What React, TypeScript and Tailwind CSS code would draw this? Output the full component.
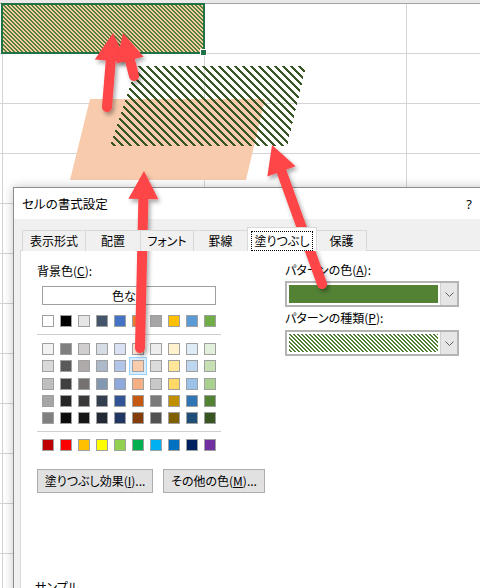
import React from "react";

const topRow = ["bg-[#ffffff]", "bg-[#000000]", "bg-[#e7e6e6]", "bg-[#44546a]", "bg-[#4472c4]", "bg-[#ed7d31]", "bg-[#a5a5a5]", "bg-[#ffc000]", "bg-[#5b9bd5]", "bg-[#70ad47]"];
const tintRows = [
    ["bg-[#f2f2f2]", "bg-[#7f7f7f]", "bg-[#d0cece]", "bg-[#d6dce4]", "bg-[#d9e1f2]", "bg-[#fce4d6]", "bg-[#ededed]", "bg-[#fff2cc]", "bg-[#ddebf7]", "bg-[#e2efda]"],
    ["bg-[#d9d9d9]", "bg-[#595959]", "bg-[#aeaaaa]", "bg-[#acb9ca]", "bg-[#b4c6e7]", "bg-[#f8cbad]", "bg-[#dbdbdb]", "bg-[#ffe699]", "bg-[#bdd7ee]", "bg-[#c6e0b4]"],
    ["bg-[#bfbfbf]", "bg-[#404040]", "bg-[#757171]", "bg-[#8497b0]", "bg-[#8ea9db]", "bg-[#f4b084]", "bg-[#c9c9c9]", "bg-[#ffd966]", "bg-[#9bc2e6]", "bg-[#a9d08e]"],
    ["bg-[#a6a6a6]", "bg-[#262626]", "bg-[#3a3838]", "bg-[#333f4f]", "bg-[#305496]", "bg-[#c65911]", "bg-[#7b7b7b]", "bg-[#bf8f00]", "bg-[#2f75b5]", "bg-[#548235]"],
    ["bg-[#808080]", "bg-[#0d0d0d]", "bg-[#161616]", "bg-[#222b35]", "bg-[#203764]", "bg-[#833c0c]", "bg-[#525252]", "bg-[#806000]", "bg-[#1f4e78]", "bg-[#375623]"],
];
const standardRow = ["bg-[#c00000]", "bg-[#ff0000]", "bg-[#ffc000]", "bg-[#ffff00]", "bg-[#92d050]", "bg-[#00b050]", "bg-[#00b0f0]", "bg-[#0070c0]", "bg-[#002060]", "bg-[#7030a0]"];

const tabs = [
    { label: "表示形式", w: "w-[64px]" },
    { label: "配置", w: "w-[56px]" },
    { label: "フォント", w: "w-[54px]" },
    { label: "罫線", w: "w-[55px]" },
    { label: "塗りつぶし", w: "w-[70px]", active: true },
    { label: "保護", w: "w-[51px]" },
];

const RED = "#fe4447";

// pixel stripes going down-right, (x - y) mod period < thick
function hatchRects(period: number, thick: number, fg: string) {
    const rects: React.ReactNode[] = [];
    for (let y = 0; y < period; y++) {
        for (let k = 0; k < thick; k++) {
            rects.push(<rect key={`${y}-${k}`} x={(y + k) % period} y={y} width={1} height={1} fill={fg} />);
        }
    }
    return rects;
}

function Hatch({ id, period, thick, fg, bg }: { id: string; period: number; thick: number; fg: string; bg: string }) {
    return (
        <svg className="block w-full h-full" shapeRendering="crispEdges">
            <defs>
                <pattern id={id} width={period} height={period} patternUnits="userSpaceOnUse">
                    <rect width={period} height={period} fill={bg} />
                    {hatchRects(period, thick, fg)}
                </pattern>
            </defs>
            <rect width="100%" height="100%" fill={`url(#${id})`} />
        </svg>
    );
}

function Arrow({ x1, y1, x2, y2, head = 28, half = 15 }: { x1: number; y1: number; x2: number; y2: number; head?: number; half?: number }) {
    const dx = x2 - x1;
    const dy = y2 - y1;
    const len = Math.hypot(dx, dy);
    const ux = dx / len;
    const uy = dy / len;
    const bx = x2 - ux * head;
    const by = y2 - uy * head;
    const px = -uy * half;
    const py = ux * half;
    return (
        <g filter="url(#arrowShadow)">
            <line x1={x1} y1={y1} x2={bx + ux * 3} y2={by + uy * 3} stroke={RED} strokeWidth={10} strokeLinecap="round" />
            <polygon points={`${x2},${y2} ${bx + px},${by + py} ${bx - px},${by - py}`} fill={RED} />
        </g>
    );
}

function Swatch({ bg, selected }: { bg: string; selected?: boolean }) {
    return (
        <div
            className={`w-[12px] h-[12px] border border-[#a0a0a0] ${bg} ${
                selected ? "shadow-[0_0_0_2px_#d8eeff,0_0_0_3px_#99d1ff]" : ""
            }`}
        />
    );
}

function SwatchRow({ colors, selectedIndex }: { colors: string[]; selectedIndex?: number }) {
    return (
        <div className="flex gap-[6px] ml-[5px]">
            {colors.map((c, i) => (
                <Swatch key={i} bg={c} selected={i === selectedIndex} />
            ))}
        </div>
    );
}

function Chevron() {
    return (
        <svg width="9" height="5" viewBox="0 0 9 5">
            <polyline points="0.5,0.5 4.5,4.5 8.5,0.5" fill="none" stroke="#606060" strokeWidth="1" />
        </svg>
    );
}

function Dropdown({ children }: { children: React.ReactNode }) {
    return (
        <div className="flex w-[174px] h-[26px] border-2 border-[#b4b4b4] bg-white">
            <div className="flex-1 p-[2px]">{children}</div>
            <div className="w-[17px] flex items-center justify-center bg-[#e6e6e6] border-l border-[#cfcfcf]">
                <Chevron />
            </div>
        </div>
    );
}

export default function App() {
    const rows = Array.from({ length: 12 });

    return (
        <div className="relative w-[480px] h-[588px] overflow-hidden bg-white">
            {/* Sheet grid */}
            <div className="h-[4px] bg-[#e9e9e9] border-b border-[#a3a3a3]" />
            {rows.map((_, r) => (
                <div key={r} className="flex h-[50px] border-b border-[#d4d4d4]">
                    <div className="w-[3px] border-r border-[#d4d4d4]" />
                    <div className="w-[202px] border-r border-[#d4d4d4]" />
                    <div className="w-[202px] border-r border-[#d4d4d4]" />
                    <div className="flex-1" />
                </div>
            ))}

            {/* Selected cell */}
            <div className="absolute left-[1px] top-[3px] w-[204px] h-[51px] border-2 border-[#217346]">
                <Hatch id="cellHatch" period={4} thick={2} fg="#548235" bg="#f8cbad" />
            </div>
            <div className="absolute left-[200px] top-[49px] w-[7px] h-[7px] bg-[#217346] border border-white" />

            {/* Shapes */}
            <svg className="absolute left-0 top-0 w-[480px] h-[588px] pointer-events-none" shapeRendering="crispEdges">
                <defs>
                    <pattern id="bigHatch" width={8} height={8} patternUnits="userSpaceOnUse">
                        {hatchRects(8, 3, "#375623")}
                    </pattern>
                </defs>
                <polygon points="90,99 265,99 246,180 70,180" fill="#f8cbad" shapeRendering="auto" />
                <polygon points="137,66 306,66 287,146 110,146" fill="url(#bigHatch)" />
            </svg>

            {/* Dialog */}
            <div className="absolute left-[13px] top-[187px] w-[480px] h-[420px] border border-[#8c8c8c] bg-[#f0f0f0] shadow-[0_0_10px_rgba(0,0,0,0.22)] font-['Noto_Sans_CJK_JP','Noto_Sans',sans-serif] text-[12px] leading-[16px] text-black [font-feature-settings:'palt']">
                <div className="h-[31px] bg-white flex items-center justify-between pl-[8px] pr-[20px]">
                    <span className="text-[12.5px]">セルの書式設定</span>
                    <span className="font-['Noto_Sans',sans-serif] text-[13px]">?</span>
                </div>

                {/* Tabs */}
                <div className="relative z-10 flex items-end h-[32px] ml-[8px] -mb-px">
                    {tabs.map((t, i) =>
                        t.active ? (
                            <div
                                key={t.label}
                                className={`${t.w} -ml-px h-[24px] bg-white border border-b-0 border-[#d9d9d9] flex justify-center`}
                            >
                                <span className="mt-[3px] h-[20px] px-[3px] border border-dotted border-black flex items-center">
                                    {t.label}
                                </span>
                            </div>
                        ) : (
                            <div
                                key={t.label}
                                className={`${t.w} ${i === 0 ? "" : "-ml-px"} h-[21px] bg-[#f0f0f0] border border-b-0 border-[#d9d9d9] flex items-center justify-center`}
                            >
                                {t.label}
                            </div>
                        )
                    )}
                </div>

                {/* Panel */}
                <div className="ml-[6px] h-[360px] bg-white border border-[#d9d9d9] flex">
                    <div className="w-[248px] pl-[16px] pt-[12px] flex flex-col">
                        <div>
                            背景色(<span className="underline">C</span>):
                        </div>
                        <div className="mt-[7px] ml-[5px] w-[174px] h-[19px] border border-[#a0a0a0] flex items-center justify-center">
                            色なし
                        </div>
                        <div className="mt-[10px]">
                            <SwatchRow colors={topRow} />
                        </div>
                        <div className="mt-[7px] w-[184px] h-px bg-[#cfcfcf]" />
                        <div className="mt-[8px] flex flex-col gap-[5.25px]">
                            {tintRows.map((row, i) => (
                                <SwatchRow key={i} colors={row} selectedIndex={i === 1 ? 5 : undefined} />
                            ))}
                        </div>
                        <div className="mt-[7px] w-[184px] h-px bg-[#cfcfcf]" />
                        <div className="mt-[7px]">
                            <SwatchRow colors={standardRow} />
                        </div>
                        <div className="mt-[18px] flex gap-[10px]">
                            <button className="w-[116px] h-[24px] bg-[#e1e1e1] border border-[#adadad] flex items-center justify-center">
                                塗りつぶし効果(<span className="underline">I</span>)...
                            </button>
                            <button className="w-[102px] h-[24px] bg-[#e1e1e1] border border-[#adadad] flex items-center justify-center">
                                その他の色(<span className="underline">M</span>)...
                            </button>
                        </div>
                        <div className="mt-[86px] -ml-[2px]">サンプル</div>
                    </div>

                    <div className="pl-[16px] pt-[11px] flex flex-col">
                        <div>
                            パターンの色(<span className="underline">A</span>):
                        </div>
                        <div className="mt-[3px]">
                            <Dropdown>
                                <div className="w-full h-full bg-[#548235]" />
                            </Dropdown>
                        </div>
                        <div className="mt-[3px]">
                            パターンの種類(<span className="underline">P</span>):
                        </div>
                        <div className="mt-[4px]">
                            <Dropdown>
                                <Hatch id="ddHatch" period={4} thick={2} fg="#548235" bg="#ffffff" />
                            </Dropdown>
                        </div>
                    </div>
                </div>
            </div>

            {/* Arrows */}
            <svg className="absolute left-0 top-0 w-[480px] h-[588px] pointer-events-none">
                <defs>
                    <filter id="arrowShadow" x="-50%" y="-50%" width="200%" height="200%">
                        <feDropShadow dx="2" dy="3" stdDeviation="2" floodColor="#000" floodOpacity="0.35" />
                    </filter>
                </defs>
                <Arrow x1={107} y1={107} x2={113} y2={33} half={16} />
                <Arrow x1={134} y1={76} x2={123} y2={33} half={14} />
                <Arrow x1={140} y1={348} x2={144} y2={171} half={15} />
                <Arrow x1={322} y1={284} x2={272} y2={145} half={15} />
            </svg>
        </div>
    );
}
